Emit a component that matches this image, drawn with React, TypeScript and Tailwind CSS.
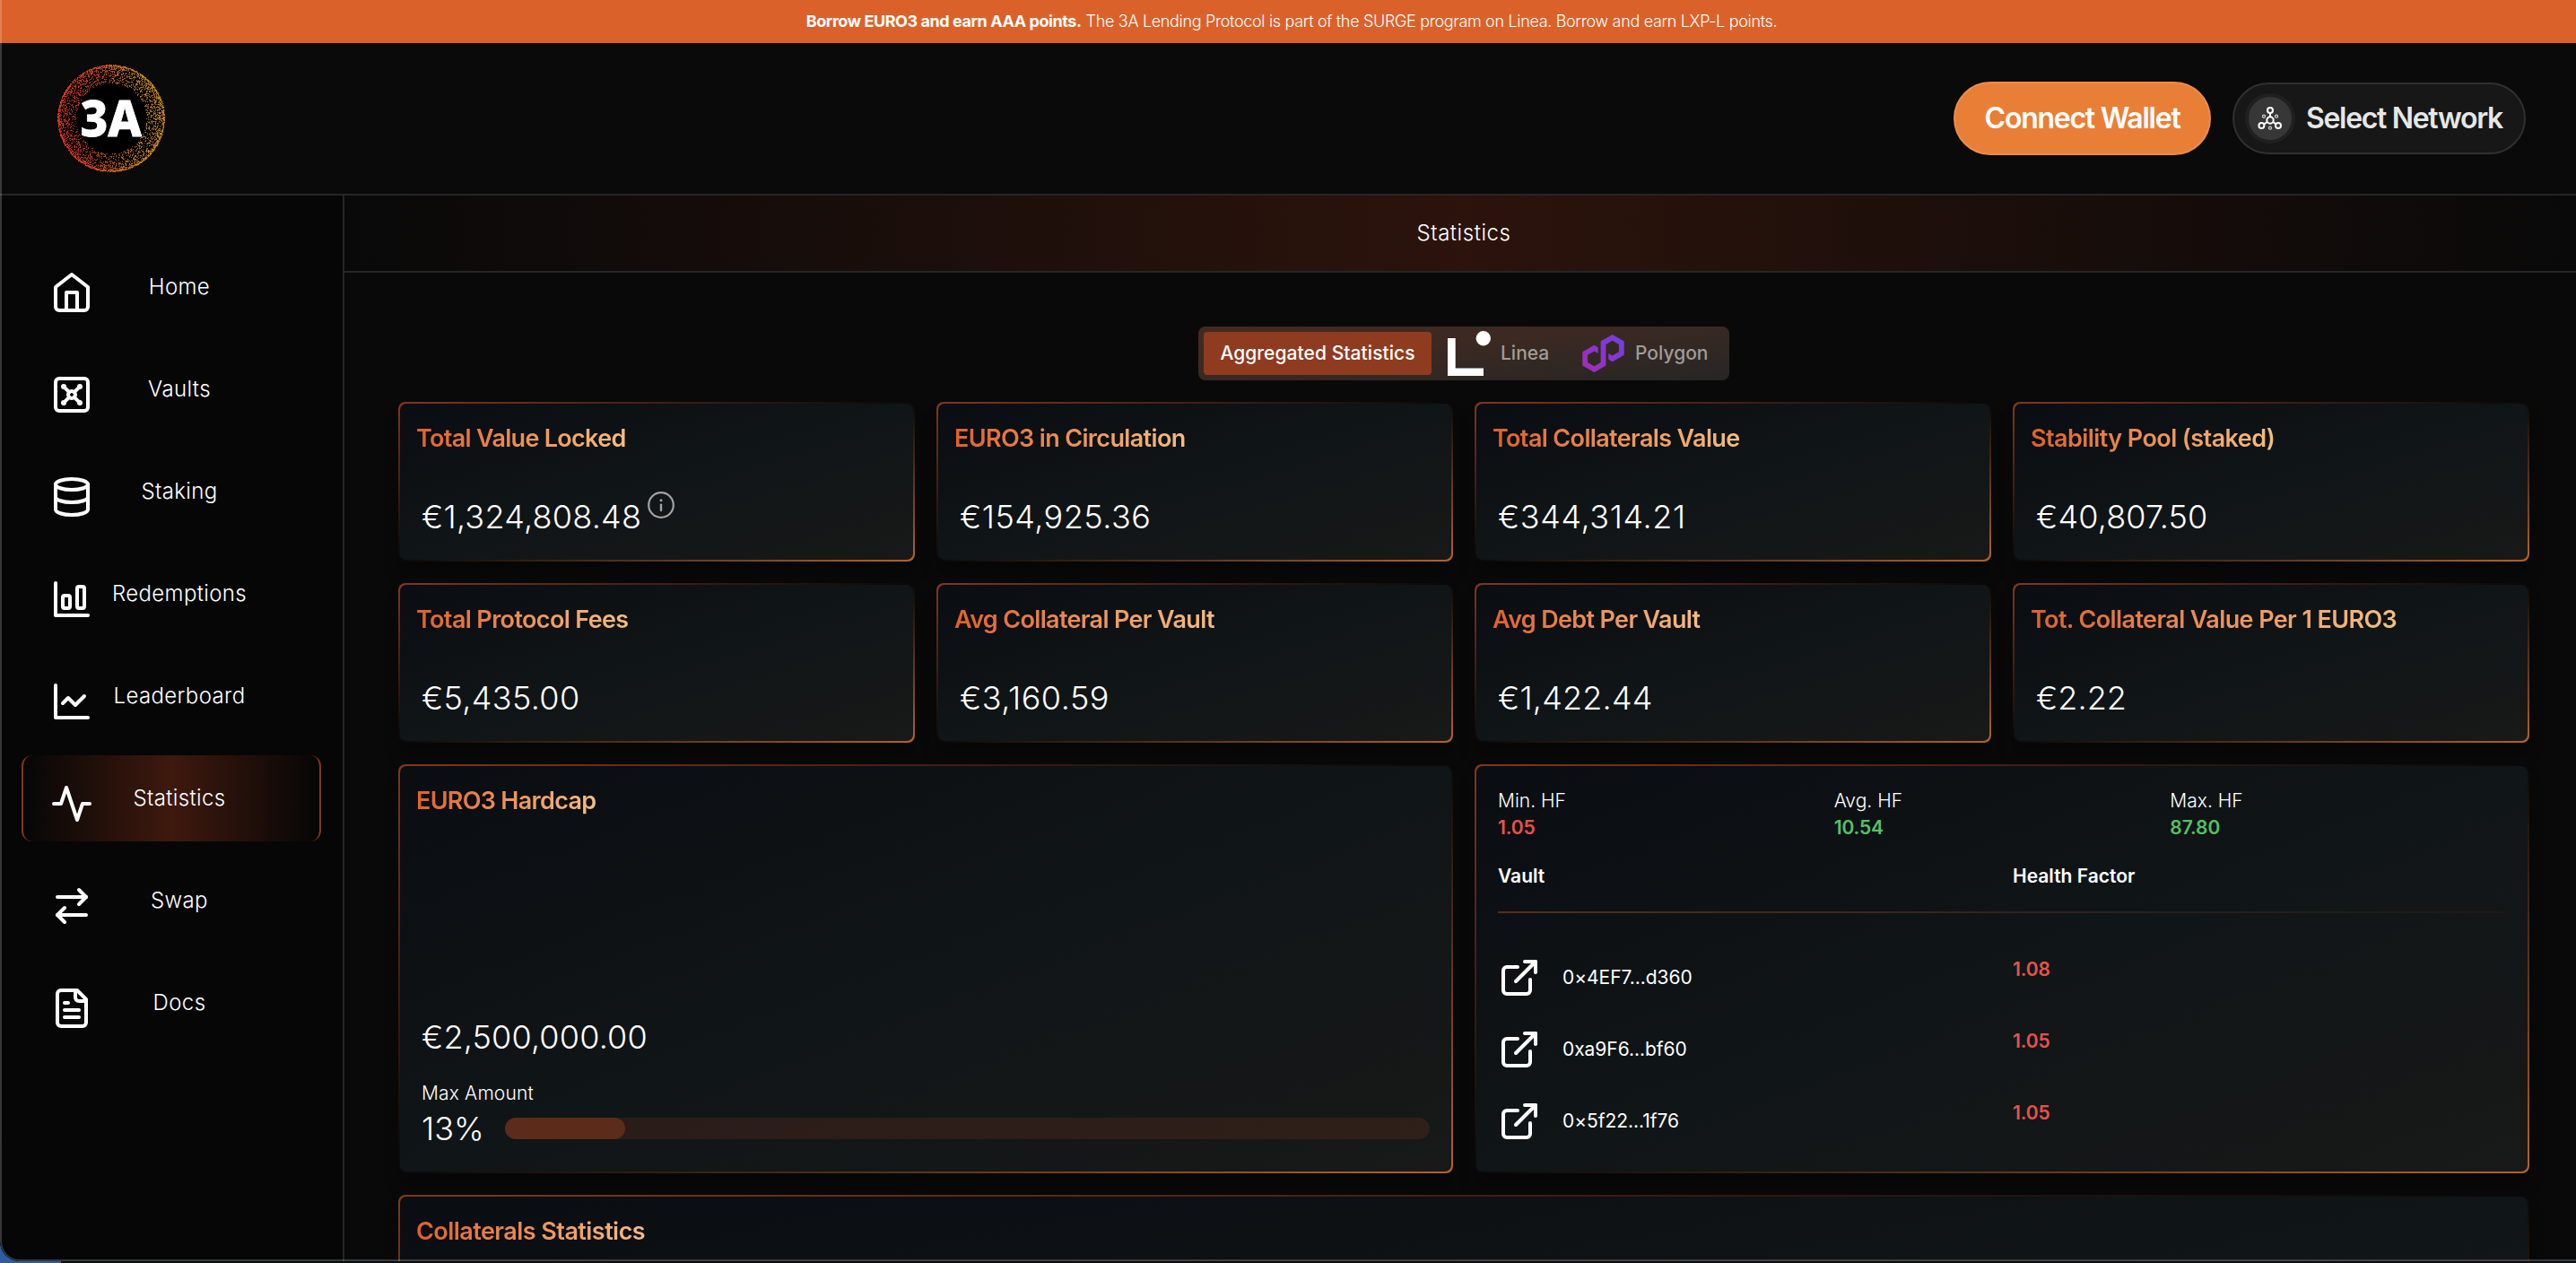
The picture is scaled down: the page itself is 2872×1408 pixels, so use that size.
import React from "react";

const NAV: { label: string; icon: React.ReactNode }[] = [
  {
    label: "Home",
    icon: (
      <>
        <path d="m3 9 9-7 9 7v11a2 2 0 0 1-2 2H5a2 2 0 0 1-2-2z" />
        <polyline points="9 22 9 12 15 12 15 22" />
      </>
    ),
  },
  {
    label: "Vaults",
    icon: (
      <>
        <rect width="18" height="18" x="3" y="3" rx="2" />
        <circle cx="7.5" cy="7.5" r=".5" fill="currentColor" />
        <path d="m7.9 7.9 2.7 2.7" />
        <circle cx="16.5" cy="7.5" r=".5" fill="currentColor" />
        <path d="m13.4 10.6 2.7-2.7" />
        <circle cx="7.5" cy="16.5" r=".5" fill="currentColor" />
        <path d="m7.9 16.1 2.7-2.7" />
        <circle cx="16.5" cy="16.5" r=".5" fill="currentColor" />
        <path d="m13.4 13.4 2.7 2.7" />
        <circle cx="12" cy="12" r="2" />
      </>
    ),
  },
  {
    label: "Staking",
    icon: (
      <>
        <ellipse cx="12" cy="5" rx="9" ry="3" />
        <path d="M3 5V19A9 3 0 0 0 21 19V5" />
        <path d="M3 12A9 3 0 0 0 21 12" />
      </>
    ),
  },
  {
    label: "Redemptions",
    icon: (
      <>
        <path d="M3 3v18h18" />
        <rect width="4" height="7" x="7" y="10" rx="1" />
        <rect width="4" height="12" x="15" y="5" rx="1" />
      </>
    ),
  },
  {
    label: "Leaderboard",
    icon: (
      <>
        <path d="M3 3v18h18" />
        <path d="m19 9-5 5-4-4-3 3" />
      </>
    ),
  },
  { label: "Statistics", icon: <path d="M22 12h-4l-3 9L9 3l-3 9H2" /> },
  {
    label: "Swap",
    icon: (
      <>
        <path d="m16 3 4 4-4 4" />
        <path d="M20 7H4" />
        <path d="m8 21-4-4 4-4" />
        <path d="M4 17h16" />
      </>
    ),
  },
  {
    label: "Docs",
    icon: (
      <>
        <path d="M15 2H6a2 2 0 0 0-2 2v16a2 2 0 0 0 2 2h12a2 2 0 0 0 2-2V7Z" />
        <path d="M14 2v4a2 2 0 0 0 2 2h4" />
        <path d="M10 9H8" />
        <path d="M16 13H8" />
        <path d="M16 17H8" />
      </>
    ),
  },
];

const STATS = [
  { title: "Total Value Locked", value: "€1,324,808.48", info: true, track: "tracking-[-0.7px]", spacing: "tracking-[0.25px]" },
  { title: "EURO3 in Circulation", value: "€154,925.36", track: "tracking-[-0.64px]", spacing: "tracking-[0.5px]" },
  { title: "Total Collaterals Value", value: "€344,314.21", track: "tracking-[-0.64px]", spacing: "tracking-[0.6px]" },
  { title: "Stability Pool (staked)", value: "€40,807.50", track: "tracking-[-0.58px]", spacing: "tracking-[0.15px]" },
  { title: "Total Protocol Fees", value: "€5,435.00", track: "tracking-[-0.64px]", spacing: "tracking-[0.35px]" },
  { title: "Avg Collateral Per Vault", value: "€3,160.59", track: "tracking-[-0.66px]", spacing: "tracking-[0.55px]" },
  { title: "Avg Debt Per Vault", value: "€1,422.44", track: "tracking-[-0.66px]", spacing: "tracking-[0.2px]" },
  { title: "Tot. Collateral Value Per 1 EURO3", value: "€2.22", track: "tracking-[-0.61px]", spacing: "tracking-[0.05px]" },
];

const FACTORS = [
  { label: "Min. HF", value: "1.05", color: "text-[#e5534b]" },
  { label: "Avg. HF", value: "10.54", color: "text-[#57c062]" },
  { label: "Max. HF", value: "87.80", color: "text-[#57c062]" },
];

const VAULTS = [
  { address: "0×4EF7...d360", factor: "1.08" },
  { address: "0xa9F6...bf60", factor: "1.05" },
  { address: "0×5f22...1f76", factor: "1.05" },
];

function StrokeIcon({ children }: { children: React.ReactNode }) {
  return (
    <svg
      className="size-12 shrink-0"
      viewBox="0 0 24 24"
      fill="none"
      stroke="currentColor"
      strokeWidth="2"
      strokeLinecap="round"
      strokeLinejoin="round"
    >
      {children}
    </svg>
  );
}

/* Ring of particles, dense on the rim and thinning towards the centre. */
function particles() {
  let seed = 1337;
  const rand = () => {
    seed = (seed * 1664525 + 1013904223) % 4294967296;
    return seed / 4294967296;
  };
  const dots: { x: number; y: number; o: number; c: string }[] = [];
  for (let i = 0; i < 4200; i++) {
    const angle = rand() * Math.PI * 2;
    const depth = Math.pow(rand(), 2.5) * 20;
    const r = 59.3 - depth;
    const x = 60 + Math.cos(angle) * r;
    const y = 60 + Math.sin(angle) * r;
    const t = Math.min(1, Math.max(0, (x - 25) / 70));
    const c = `rgb(${Math.round(214 - 14 * t)},${Math.round(62 + 78 * t)},${Math.round(40 + 4 * t)})`;
    dots.push({ x: Math.floor(x), y: Math.floor(y), o: 0.4 + rand() * 0.55, c });
  }
  return dots;
}
const DOTS = particles();

function Logo() {
  return (
    <svg className="size-[120px]" viewBox="0 0 120 120">
      <circle cx="60" cy="60" r="60" fill="#000" />
      {DOTS.map((d, i) => (
        <rect key={i} x={d.x} y={d.y} width="1.1" height="1.1" fill={d.c} opacity={d.o} />
      ))}
      <text
        x="25.5"
        y="79.5"
        fontFamily="Noto Sans, sans-serif"
        fontWeight="800"
        fontSize="56"
        textLength="68.5"
        lengthAdjust="spacingAndGlyphs"
        fill="#fff"
        stroke="#fff"
        strokeWidth="0.8"
      >
        3A
      </text>
    </svg>
  );
}

function NetworkIcon() {
  return (
    <svg className="size-7" viewBox="0 0 28 28" fill="none" stroke="#fff" strokeWidth="2">
      <circle cx="14" cy="5" r="3" />
      <circle cx="14" cy="16" r="3.7" />
      <circle cx="4.4" cy="22" r="3" />
      <circle cx="23" cy="22" r="3" />
      <path d="M14 8v4.3M10.9 18 7 20.3M17.1 18l3.5 2.3" />
      <g stroke="#cfcfcf" strokeWidth="1.3">
        <circle cx="7" cy="11.7" r="1.5" />
        <circle cx="21" cy="11.7" r="1.5" />
        <circle cx="14" cy="24.7" r="1.5" />
      </g>
    </svg>
  );
}

function Card({ className = "", children }: { className?: string; children: React.ReactNode }) {
  return (
    <section
      className={`rounded-lg bg-[linear-gradient(to_bottom_right,#82371c,rgba(130,55,28,0)_50%,#b5622a)] p-[2px] shadow-[0_16px_16px_rgba(0,0,0,0.25)] ${className}`}
    >
      <div className="flex h-full flex-col rounded-[7px] bg-[linear-gradient(to_bottom_right,#0a0d12,#101517_50%,#181918)] px-6 py-6">
        {children}
      </div>
    </section>
  );
}

function Title({ track, children }: { track: string; children: React.ReactNode }) {
  return (
    <h2
      className={`-ml-1.5 -mt-[3px] w-fit bg-gradient-to-r from-[#e0602a] to-[#f5bf82] bg-clip-text pr-1 text-[27px] leading-9 font-semibold text-transparent ${track}`}
    >
      {children}
    </h2>
  );
}

export default function App() {
  return (
    <div className="relative h-[1408px] w-[2872px] overflow-hidden bg-[linear-gradient(to_right,#2a5da3_68px,#0d0e10_68px)] font-['Inter',sans-serif] text-white antialiased">
      <div className="relative flex h-[1406px] flex-col overflow-hidden rounded-bl-[22px] bg-[#090909]">
        <div className="flex h-12 shrink-0 items-center justify-center gap-[5px] bg-[#da622a] pl-2 text-[18px] leading-6 whitespace-pre">
          <span className="font-bold tracking-[-0.43px]">Borrow EURO3 and earn AAA points.</span>
          <span className="font-light tracking-[-0.335px]">
            The 3A Lending Protocol is part of the SURGE program on Linea. Borrow and earn LXP-L points.
          </span>
        </div>

        <header className="flex h-[170px] shrink-0 items-center border-b-2 border-[#262626] bg-[#0a0a0a] pr-14 pl-16">
          <Logo />
          <div className="ml-auto flex items-center gap-6">
            <button className="flex h-[82px] w-[287px] items-center justify-center rounded-full border-2 border-[#ec8c4b] bg-[#e97f37] text-[32px] font-semibold tracking-[-1.25px] whitespace-nowrap">
              Connect Wallet
            </button>
            <button className="flex h-20 w-[327px] items-center rounded-full border-2 border-[#303030] bg-[#171717] pl-3 text-[32px] font-semibold tracking-[-1.32px] whitespace-nowrap text-[#e5e7e6]">
              <span className="flex size-14 items-center justify-center rounded-full border-4 border-[#202020] bg-[#373737]">
                <NetworkIcon />
              </span>
              <span className="ml-3">Select Network</span>
            </button>
          </div>
        </header>

        <div className="flex min-h-0 flex-1">
          <nav className="flex w-96 shrink-0 flex-col gap-[18px] border-r-2 border-[#262626] bg-[#060606] pt-[54px] pl-6">
            {NAV.map((item) => (
              <a
                key={item.label}
                className={
                  item.label === "Statistics"
                    ? "flex h-24 w-[334px] items-center rounded-xl border-x-2 border-[#7e3820] bg-[linear-gradient(to_right,rgba(62,25,13,0),#3e190d,rgba(62,25,13,0))] pl-[30px]"
                    : "flex h-24 w-[334px] items-center pl-8"
                }
              >
                <span className="pt-3">
                  <StrokeIcon>{item.icon}</StrokeIcon>
                </span>
                <span className="w-[192px] text-center text-[24px] leading-8 font-light tracking-[0.37px]">
                  {item.label}
                </span>
              </a>
            ))}
          </nav>

          <main className="min-w-0 flex-1">
            <div className="flex h-[86px] items-center justify-center border-b-2 border-[#262626] bg-[linear-gradient(to_right,rgba(44,19,12,0),#2c130c,rgba(44,19,12,0))] pl-2 text-[24px] font-light tracking-[0.55px]">
              Statistics
            </div>

            <div className="flex flex-col pt-[60px] pr-[52px] pl-[60px]">
              <div className="flex h-[60px] w-[592px] items-center self-center rounded-lg bg-[linear-gradient(to_bottom_right,#452920,#3a2922_45%,#262625)] p-1.5 text-[21px] font-medium text-[#a19b98]">
                <button className="flex h-12 w-[254px] items-center justify-center rounded bg-[#8f3b20] tracking-[0.06px] text-white">
                  Aggregated Statistics
                </button>
                <svg className="ml-[18px] h-[50px] w-12" viewBox="0 0 48 50" fill="#fff">
                  <path d="M0 8h8.7v33.5H40V50H0z" />
                  <circle cx="39.8" cy="8.2" r="8.2" />
                </svg>
                <span className="ml-[11px] w-[54px]">Linea</span>
                <svg className="ml-[37px] h-[42px] w-[47px]" viewBox="0 0 178 161">
                  <defs>
                    <linearGradient id="polygon" x1="0" y1="1" x2="1" y2="0">
                      <stop offset="0" stopColor="#a52bb8" />
                      <stop offset="1" stopColor="#7040e0" />
                    </linearGradient>
                  </defs>
                  <path
                    fill="url(#polygon)"
                    d="M66.8 54.7l-16.7-9.7L0 74.1v58l50.1 29 50.1-29V41.9L128 25.8l27.8 16.1v32.2L128 90.2l-16.7-9.7v25.8l16.7 9.7 50.1-29V29L128 0 77.9 29v90.2l-27.8 16.1-27.8-16.1V86.9l27.8-16.1 16.7 9.7V54.7z"
                  />
                </svg>
                <span className="ml-3">Polygon</span>
              </div>

              <div className="mt-6 grid grid-cols-4 gap-6">
                {STATS.map((s) => (
                  <Card key={s.title} className="h-[178px]">
                    <Title track={s.track}>{s.title}</Title>
                    <div className={`mt-auto flex h-12 items-center text-[36px] font-light ${s.spacing}`}>
                      {s.value}
                      {s.info && (
                        <svg className="-mt-[26px] ml-[7px] size-[30px] text-[#a3a3a3]" viewBox="0 0 30 30" fill="none">
                          <circle cx="15" cy="15" r="13.8" stroke="currentColor" strokeWidth="2.2" />
                          <circle cx="15" cy="9.8" r="1.5" fill="currentColor" />
                          <path d="M15 14.6v6.4" stroke="currentColor" strokeWidth="2.4" strokeLinecap="round" />
                        </svg>
                      )}
                    </div>
                  </Card>
                ))}

                <Card className="col-span-2 h-[456px]">
                  <Title track="tracking-[-0.7px]">EURO3 Hardcap</Title>
                  <div className="mt-auto text-[36px] leading-[48px] font-light tracking-[0.17px]">€2,500,000.00</div>
                  <div className="mt-6 text-[21px] leading-[30px] font-light tracking-[0.15px]">Max Amount</div>
                  <div className="flex h-12 items-center">
                    <span className="w-[93px] text-[36px] font-light">13%</span>
                    <div className="h-6 flex-1 rounded-full bg-[#8f3b20]/20">
                      <div className="h-full w-[13%] rounded-full bg-[#5c2b1a]" />
                    </div>
                  </div>
                </Card>

                <Card className="col-span-2 h-[456px]">
                  <div className="grid grid-cols-3 text-[21px] leading-[30px]">
                    {FACTORS.map((f) => (
                      <div key={f.label}>
                        <div className="font-light">{f.label}</div>
                        <div className={`font-semibold tracking-[-0.1px] ${f.color}`}>{f.value}</div>
                      </div>
                    ))}
                  </div>
                  <div className="mt-6 flex text-[21px] leading-[30px] font-semibold">
                    <div className="w-[574px]">Vault</div>
                    <div>Health Factor</div>
                  </div>
                  <div className="mt-6 mb-8 h-0.5 shrink-0 bg-[linear-gradient(to_right,#553019,rgba(80,50,30,0.1))]" />
                  {VAULTS.map((v) => (
                    <div key={v.address} className="flex h-20 shrink-0 items-center text-[21px]">
                      <StrokeIcon>
                        <path d="M15 3h6v6" />
                        <path d="M10 14 21 3" />
                        <path d="M18 13v6a2 2 0 0 1-2 2H5a2 2 0 0 1-2-2V8a2 2 0 0 1 2-2h6" />
                      </StrokeIcon>
                      <span className="ml-6 w-[502px] tracking-[-0.05px]">{v.address}</span>
                      <span className="mb-[18px] font-semibold tracking-[-0.1px] text-[#e5534b]">{v.factor}</span>
                    </div>
                  ))}
                </Card>

                <Card className="col-span-4 h-[480px]">
                  <Title track="tracking-[-0.55px]">Collaterals Statistics</Title>
                </Card>
              </div>
            </div>
          </main>
        </div>

        <div className="pointer-events-none absolute inset-0 rounded-bl-[22px] border-b-2 border-l-2 border-white/20" />
      </div>
    </div>
  );
}
